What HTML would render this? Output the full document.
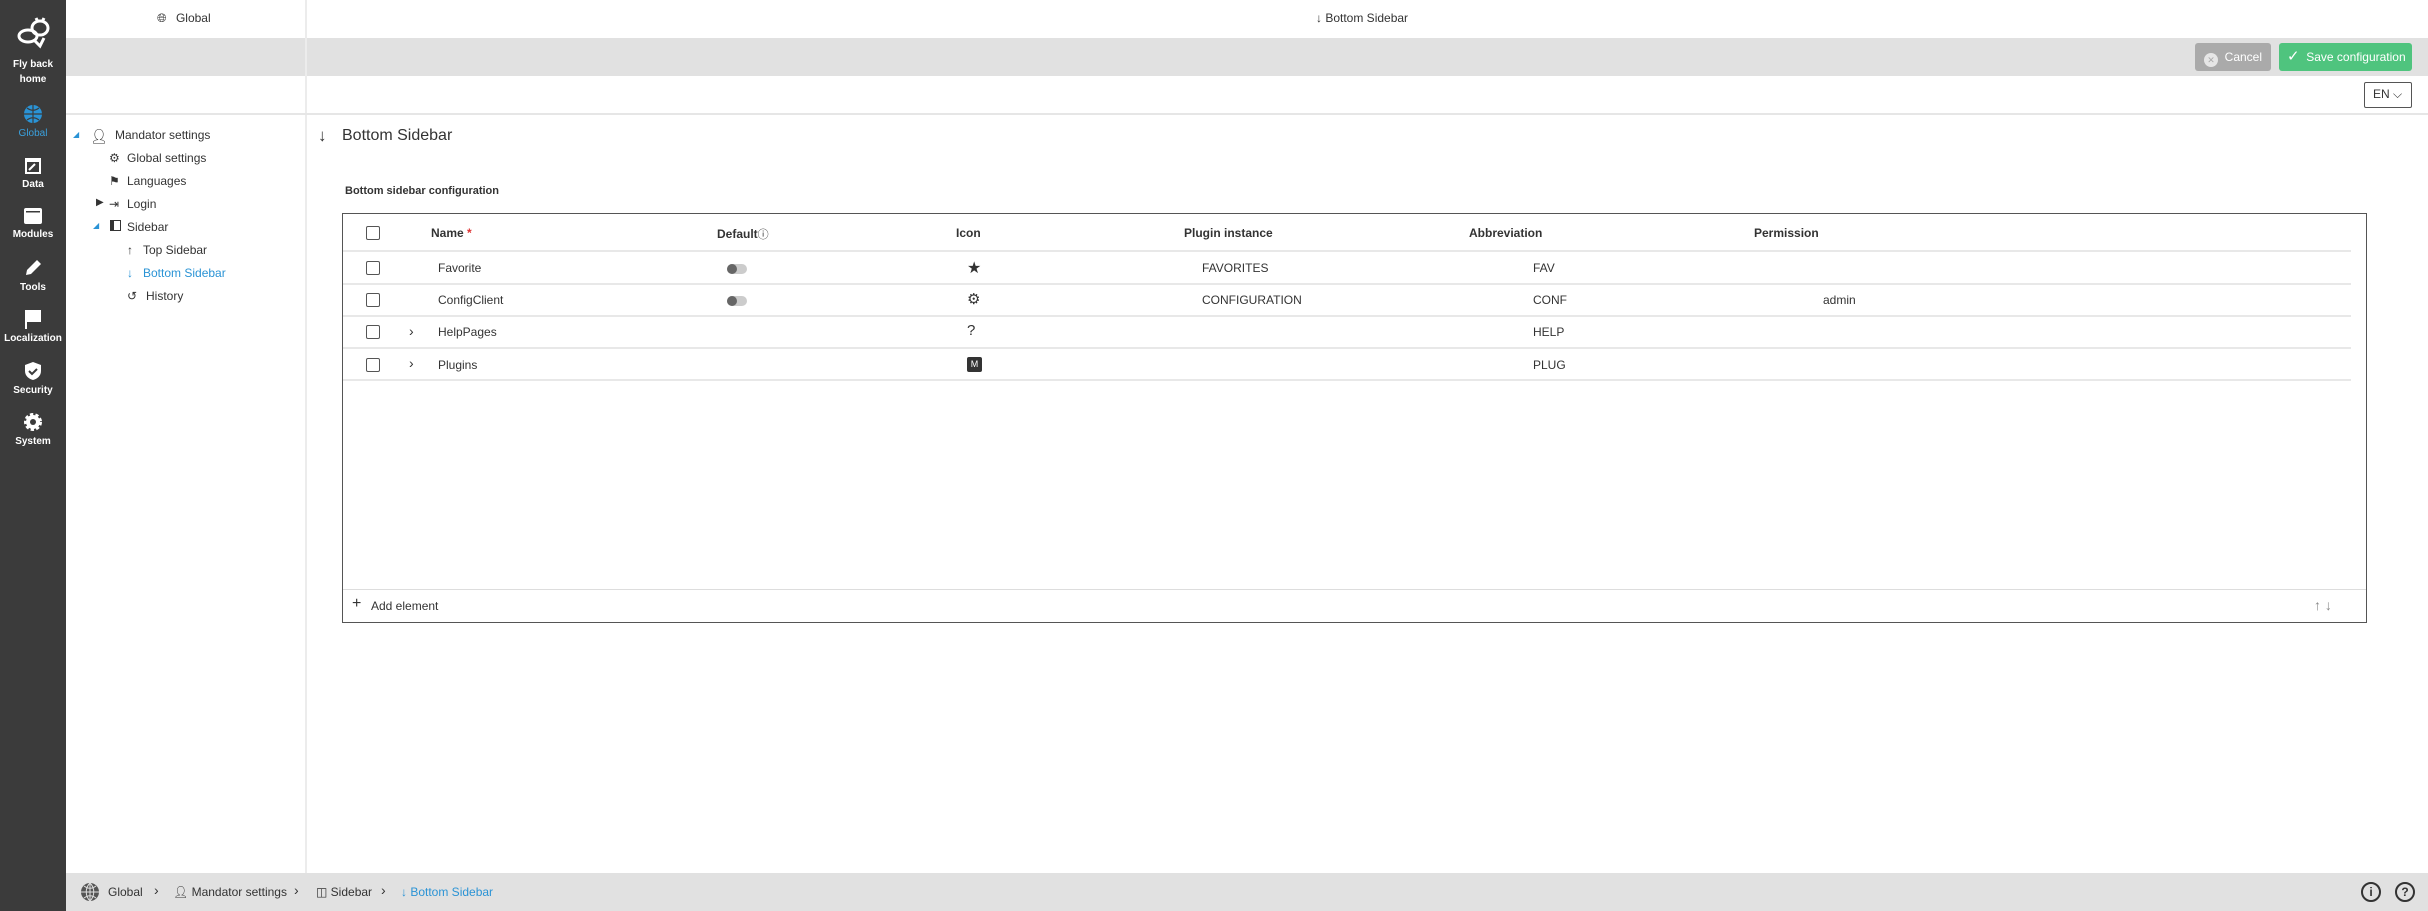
<!DOCTYPE html>
<html><head><meta charset="utf-8"><style>
*{margin:0;padding:0;box-sizing:border-box}
body{width:2428px;height:911px;position:relative;overflow:hidden;font-family:"Liberation Sans",sans-serif;color:#333;background:#fff;font-size:12px}
.a{position:absolute;white-space:nowrap}
#side{left:0;top:0;width:66px;height:911px;background:#3b3b3b}
.si{position:absolute;left:0;width:66px;text-align:center;color:#fff;font-size:10px;font-weight:bold}
.si svg{display:block;margin:0 auto 4px}
.hl{background:#e1e1e1}
.cb{position:absolute;width:14px;height:14px;border:1.5px solid #555;border-radius:2px;background:#fff}
.th{font-weight:bold;font-size:12px;color:#333}
.rl{position:absolute;left:343px;width:2008px;height:2px;background:#e8e8e8}
.tg{position:absolute;width:20px;height:10px;border-radius:5px;background:#ccc}
.tg:before{content:"";position:absolute;left:0;top:0;width:10px;height:10px;border-radius:5px;background:#666}
</style></head><body>
<div id="side" class="a"></div>
<div class="si" style="top:12px"><svg width="38" height="38" viewBox="0 0 38 38" fill="none" stroke="#fff" stroke-width="3"><ellipse cx="14" cy="24" rx="9" ry="6"/><ellipse cx="26" cy="16" rx="8" ry="7"/><path d="M20 28l6 6 4-8"/><path d="M22 6l2 4M30 6l-2 4"/></svg></div>
<div class="si" style="top:57px;line-height:15px">Fly back<br>home</div>
<div class="si" style="top:104px;color:#3aa0dc;font-weight:normal"><svg width="20" height="20" viewBox="0 0 20 20"><circle cx="10" cy="10" r="9" fill="#2a93d5"/><path d="M1 10h18M10 1v18M4 4c4 3 8 3 12 0M4 16c4-3 8-3 12 0" stroke="#3b3b3b" stroke-width="1.2" fill="none"/></svg>Global</div>
<div class="si" style="top:155px"><svg width="18" height="20" viewBox="0 0 18 20"><rect x="1" y="3" width="16" height="16" fill="#fff"/><rect x="3" y="7" width="12" height="10" fill="#3b3b3b"/><path d="M5 15l6-6" stroke="#fff" stroke-width="2"/></svg>Data</div>
<div class="si" style="top:207px"><svg width="20" height="18" viewBox="0 0 20 18"><rect x="1" y="1" width="18" height="16" rx="2" fill="#fff"/><rect x="3" y="4" width="14" height="1.5" fill="#3b3b3b"/></svg>Modules</div>
<div class="si" style="top:258px"><svg width="20" height="20" viewBox="0 0 20 20"><path d="M3 17l1-5 10-10 4 4-10 10z" fill="#fff"/></svg>Tools</div>
<div class="si" style="top:309px"><svg width="20" height="20" viewBox="0 0 20 20"><path d="M3 1v19M4 2h13v10H4" fill="#fff" stroke="#fff" stroke-width="2"/></svg>Localization</div>
<div class="si" style="top:361px"><svg width="20" height="20" viewBox="0 0 20 20"><path d="M10 1l8 3v6c0 5-4 8-8 9-4-1-8-4-8-9V4z" fill="#fff"/><path d="M6 10l3 3 5-5" stroke="#3b3b3b" stroke-width="2" fill="none"/></svg>Security</div>
<div class="si" style="top:412px"><svg width="20" height="20" viewBox="0 0 20 20"><circle cx="10" cy="10" r="7" fill="#fff" stroke="#fff" stroke-width="4" stroke-dasharray="3 2"/><circle cx="10" cy="10" r="3" fill="#3b3b3b"/></svg>System</div>

<div class="a hl" style="left:66px;top:38px;width:2362px;height:38px"></div>
<div class="a" style="left:305px;top:0;width:2px;height:873px;background:#ececec"></div>
<div class="a" style="left:66px;top:113px;width:2362px;height:2px;background:#e6e6e6"></div>
<div class="a" style="left:157px;top:11px;font-size:12px">🌐&#xFE0E; <span style="margin-left:6px">Global</span></div>
<div class="a" style="left:1316px;top:11px;font-size:12px">↓ Bottom Sidebar</div>
<div class="a" style="left:2195px;top:43px;width:76px;height:28px;background:#aaa;border-radius:3px;color:#fff;font-size:12px;line-height:28px;padding-left:9px"><span style="display:inline-block;width:14px;height:14px;border-radius:7px;background:#e6e6e6;color:#aaa;font-size:9px;line-height:14px;text-align:center;vertical-align:-2px">✕</span>&nbsp; Cancel</div>
<div class="a" style="left:2279px;top:43px;width:133px;height:28px;background:#4fc47e;border-radius:3px;color:#fff;font-size:12px;line-height:28px;padding-left:8px"><span style="font-size:15px">✓</span>&nbsp; Save configuration</div>
<div class="a" style="left:2364px;top:82px;width:48px;height:26px;border:1.5px solid #555;border-radius:2px;font-size:12px;line-height:23px;padding-left:8px">EN ⌵</div>

<div class="a" style="left:73px;top:130px;color:#2a93d5;font-size:8px">◢</div>
<div class="a" style="left:90px;top:128px;font-size:14px">👤&#xFE0E;</div>
<div class="a" style="left:115px;top:128px">Mandator settings</div>
<div class="a" style="left:109px;top:151px">⚙&#xFE0E;</div><div class="a" style="left:127px;top:151px">Global settings</div>
<div class="a" style="left:109px;top:174px">⚑</div><div class="a" style="left:127px;top:174px">Languages</div>
<div class="a" style="left:96px;top:197px;font-size:10px">▶</div><div class="a" style="left:109px;top:197px">⇥</div><div class="a" style="left:127px;top:197px">Login</div>
<div class="a" style="left:93px;top:221px;color:#2a93d5;font-size:8px">◢</div><div class="a" style="left:110px;top:220px;width:11px;height:11px;border:1.5px solid #333;border-left-width:4px"></div><div class="a" style="left:127px;top:220px">Sidebar</div>
<div class="a" style="left:127px;top:243px">↑</div><div class="a" style="left:143px;top:243px">Top Sidebar</div>
<div class="a" style="left:127px;top:266px;color:#2a93d5">↓</div><div class="a" style="left:143px;top:266px;color:#2a93d5">Bottom Sidebar</div>
<div class="a" style="left:127px;top:289px">↺</div><div class="a" style="left:146px;top:289px">History</div>

<div class="a" style="left:318px;top:126px;font-size:17px">↓</div>
<div class="a" style="left:342px;top:127px;font-size:16px;color:#333">Bottom Sidebar</div>
<div class="a" style="left:345px;top:185px;font-size:11px;font-weight:bold">Bottom sidebar configuration</div>

<div class="a" style="left:342px;top:213px;width:2025px;height:410px;border:1.5px solid #555"></div>
<div class="rl" style="top:250px"></div><div class="rl" style="top:283px"></div><div class="rl" style="top:315px"></div><div class="rl" style="top:347px"></div><div class="rl" style="top:379px"></div>
<div class="a" style="left:343px;top:589px;width:2023px;height:1px;background:#ddd"></div>
<div class="cb" style="left:366px;top:226px"></div>
<div class="a th" style="left:431px;top:226px">Name <span style="color:#d33">*</span></div>
<div class="a th" style="left:717px;top:226px">Default<span style="font-weight:normal;font-size:11px">ⓘ</span></div>
<div class="a th" style="left:956px;top:226px">Icon</div>
<div class="a th" style="left:1184px;top:226px">Plugin instance</div>
<div class="a th" style="left:1469px;top:226px">Abbreviation</div>
<div class="a th" style="left:1754px;top:226px">Permission</div>

<div class="cb" style="left:366px;top:261px"></div><div class="a" style="left:438px;top:261px">Favorite</div><div class="tg" style="left:727px;top:264px"></div><div class="a" style="left:967px;top:258px;font-size:16px">★</div><div class="a" style="left:1202px;top:261px">FAVORITES</div><div class="a" style="left:1533px;top:261px">FAV</div>
<div class="cb" style="left:366px;top:293px"></div><div class="a" style="left:438px;top:293px">ConfigClient</div><div class="tg" style="left:727px;top:296px"></div><div class="a" style="left:967px;top:290px;font-size:15px">⚙&#xFE0E;</div><div class="a" style="left:1202px;top:293px">CONFIGURATION</div><div class="a" style="left:1533px;top:293px">CONF</div><div class="a" style="left:1823px;top:293px">admin</div>
<div class="cb" style="left:366px;top:325px"></div><div class="a" style="left:409px;top:323px;font-size:14px">›</div><div class="a" style="left:438px;top:325px">HelpPages</div><div class="a" style="left:967px;top:322px;font-size:15px">?</div><div class="a" style="left:1533px;top:325px">HELP</div>
<div class="cb" style="left:366px;top:358px"></div><div class="a" style="left:409px;top:355px;font-size:14px">›</div><div class="a" style="left:438px;top:358px">Plugins</div><div class="a" style="left:967px;top:357px;width:15px;height:15px;background:#333;border-radius:2px;color:#fff;font-size:9px;text-align:center;line-height:15px">M</div><div class="a" style="left:1533px;top:358px">PLUG</div>

<div class="a" style="left:352px;top:597px;font-size:16px;line-height:14px">+</div><div class="a" style="left:371px;top:599px">Add element</div>
<div class="a" style="left:2314px;top:597px;color:#888;font-size:14px;font-weight:bold">↑ ↓</div>

<div class="a hl" style="left:66px;top:873px;width:2362px;height:38px"></div>
<div class="a" style="left:80px;top:882px"><svg width="20" height="20" viewBox="0 0 20 20"><circle cx="10" cy="10" r="9" fill="#555"/><path d="M1 10h18M10 1v18M4 4c4 3 8 3 12 0M4 16c4-3 8-3 12 0M10 1c-5 5-5 13 0 18M10 1c5 5 5 13 0 18" stroke="#e1e1e1" stroke-width="1" fill="none"/></svg></div>
<div class="a" style="left:108px;top:885px">Global</div><div class="a" style="left:154px;top:882px;font-size:14px">›</div>
<div class="a" style="left:173px;top:885px">👤&#xFE0E; Mandator settings</div><div class="a" style="left:294px;top:882px;font-size:14px">›</div>
<div class="a" style="left:316px;top:885px">◫ Sidebar</div><div class="a" style="left:381px;top:882px;font-size:14px">›</div>
<div class="a" style="left:401px;top:885px;color:#2a93d5">↓ Bottom Sidebar</div>
<div class="a" style="left:2361px;top:882px;width:20px;height:20px;border:2px solid #333;border-radius:10px;text-align:center;font-size:12px;line-height:16px;font-weight:bold">i</div>
<div class="a" style="left:2395px;top:882px;width:20px;height:20px;border:2px solid #333;border-radius:10px;text-align:center;font-size:12px;line-height:16px;font-weight:bold">?</div>
</body></html>
